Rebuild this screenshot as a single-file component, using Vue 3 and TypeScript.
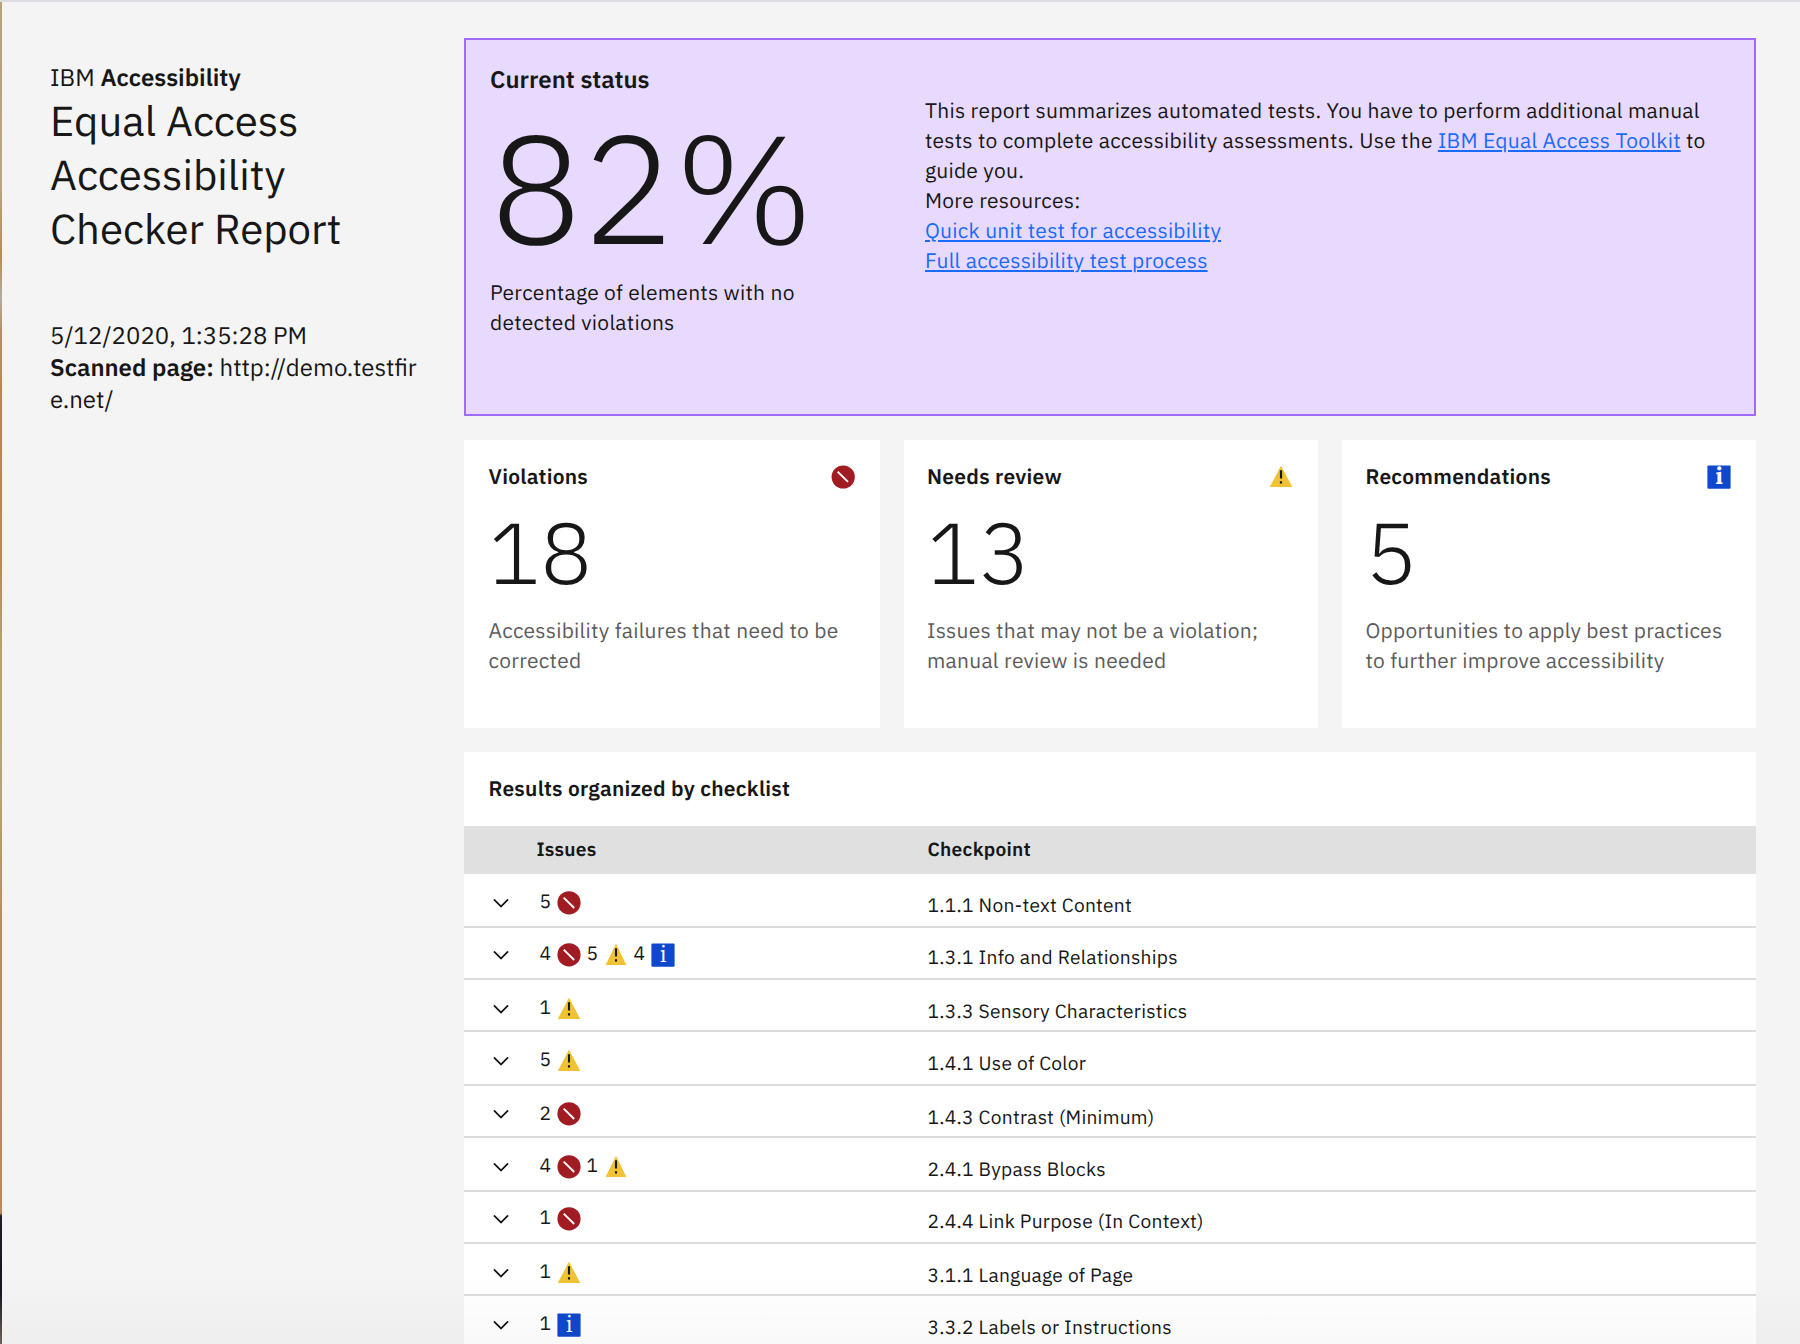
<script setup lang="ts">
type Kind = 'violation' | 'review' | 'info'

interface Summary {
  title: string
  count: number
  kind: Kind
  text: string
}

interface Row {
  issues: { count: number; kind: Kind }[]
  checkpoint: string
  size?: string
}

const summaries: Summary[] = [
  { title: 'Violations', count: 18, kind: 'violation', text: 'Accessibility failures that need to be corrected' },
  { title: 'Needs review', count: 13, kind: 'review', text: 'Issues that may not be a violation; manual review is needed' },
  { title: 'Recommendations', count: 5, kind: 'info', text: 'Opportunities to apply best practices to further improve accessibility' },
]

const rows: Row[] = [
  { issues: [{ count: 5, kind: 'violation' }], checkpoint: '1.1.1 Non-text Content', size: 'tall' },
  {
    issues: [{ count: 4, kind: 'violation' }, { count: 5, kind: 'review' }, { count: 4, kind: 'info' }],
    checkpoint: '1.3.1 Info and Relationships',
    size: 'raised',
  },
  { issues: [{ count: 1, kind: 'review' }], checkpoint: '1.3.3 Sensory Characteristics' },
  { issues: [{ count: 5, kind: 'review' }], checkpoint: '1.4.1 Use of Color', size: 'tall' },
  { issues: [{ count: 2, kind: 'violation' }], checkpoint: '1.4.3 Contrast (Minimum)', size: 'snug' },
  { issues: [{ count: 4, kind: 'violation' }, { count: 1, kind: 'review' }], checkpoint: '2.4.1 Bypass Blocks', size: 'tall' },
  { issues: [{ count: 1, kind: 'violation' }], checkpoint: '2.4.4 Link Purpose (In Context)', size: 'raised' },
  { issues: [{ count: 1, kind: 'review' }], checkpoint: '3.1.1 Language of Page' },
  { issues: [{ count: 1, kind: 'info' }], checkpoint: '3.3.2 Labels or Instructions' },
]
</script>

<template>
  <div class="page">
    <aside class="side">
      <div class="brand">IBM <strong>Accessibility</strong></div>
      <h1>Equal Access<br />Accessibility<br />Checker Report</h1>
      <div class="scan">
        <div>5/12/2020, 1:35:28 PM</div>
        <div class="url"><strong>Scanned page:</strong> http://demo.testfire.net/</div>
      </div>
    </aside>

    <main class="main">
      <section class="status">
        <div class="score">
          <h2>Current status</h2>
          <div class="percent">82%</div>
          <p>Percentage of elements with no detected violations</p>
        </div>
        <div class="about">
          This report summarizes automated tests. You have to perform additional manual tests to complete
          accessibility assessments. Use the <a href="#">IBM Equal Access Toolkit</a> to guide you.<br />
          More resources:<br />
          <a href="#">Quick unit test for accessibility</a><br />
          <a href="#">Full accessibility test process</a>
        </div>
      </section>

      <section class="cards">
        <article v-for="s in summaries" :key="s.title" class="card">
          <header>
            <h3>{{ s.title }}</h3>
            <svg class="icon" viewBox="0 0 24 24">
              <template v-if="s.kind === 'violation'">
                <circle cx="12.2" cy="12" r="11.6" fill="#a11b23" />
                <path d="M6.7 6.8 17 16.9" stroke="#fff" stroke-width="1.9" />
              </template>
              <template v-else-if="s.kind === 'review'">
                <path d="M12 .7 23.4 22.1H.7z" fill="#f1c136" />
                <path d="M12 5.2v8.2M12 16.2v2.3" stroke="#171717" stroke-width="2.2" />
              </template>
              <template v-else>
                <rect x=".4" y=".4" width="23.2" height="23.3" rx="1" fill="#0f48cc" />
                <text x="12" y="19" class="glyph strong">i</text>
              </template>
            </svg>
          </header>
          <div class="count">{{ s.count }}</div>
          <p>{{ s.text }}</p>
        </article>
      </section>

      <section class="results">
        <h3>Results organized by checklist</h3>
        <div class="head">
          <span class="col-issues">Issues</span>
          <span>Checkpoint</span>
        </div>
        <div v-for="r in rows" :key="r.checkpoint" class="row" :class="r.size">
          <svg class="icon" viewBox="0 0 16 16">
            <path d="M8 11 3 6l.7-.7L8 9.6l4.3-4.3.7.7z" fill="#000" stroke="#000" stroke-width=".15" />
          </svg>
          <div class="issues">
            <span v-for="(i, n) in r.issues" :key="n" class="issue">
              <span class="num">{{ i.count }}</span>
              <svg class="icon" viewBox="0 0 24 24">
                <template v-if="i.kind === 'violation'">
                  <circle cx="12" cy="11.8" r="11.6" fill="#a11b23" />
                  <path d="M6.7 6.6 17.2 17" stroke="#fff" stroke-width="1.9" />
                </template>
                <template v-else-if="i.kind === 'review'">
                  <path :d="n ? 'M12 .7 22.4 22.1H1.6z' : 'M12 .7 23.4 22.1H.7z'" fill="#f1c136" />
                  <path d="M12 5.2v8.2M12 16.2v2.3" stroke="#171717" stroke-width="2.1" />
                </template>
                <template v-else>
                  <rect x=".4" y=".4" width="23.2" height="23.3" rx="1" fill="#0f48cc" />
                  <text x="12" y="19" class="glyph">i</text>
                </template>
              </svg>
            </span>
          </div>
          <span class="checkpoint">{{ r.checkpoint }}</span>
        </div>
      </section>
    </main>
    <div class="shade"></div>
  </div>
</template>

<style>
body {
  margin: 0;
  overflow: hidden;
}
</style>

<style scoped>
.page {
  position: relative;
  box-sizing: border-box;
  width: 1800px;
  height: 1344px;
  overflow: hidden;
  display: flex;
  align-items: flex-start;
  background: #f4f4f4;
  border-top: 2px solid #dcdce1;
  color: #171717;
  font-family: 'IBM Plex Sans', 'Noto Sans', sans-serif;
  text-rendering: geometricPrecision;
}
.page::before {
  content: '';
  width: 2px;
  height: 1344px;
  background: linear-gradient(#b8a07c 0, #b8a684 180px, #b98d4c 255px, #b3aba0 295px, #b5905c 330px, #b98a48 400px, #b98c4c 560px, #b5a36e 650px, #b6a578 780px, #b98f56 920px, #b98a5e 1211px, #211d24 1214px, #15161f 1290px, #6b625c 1342px);
}
h1,
h2,
h3,
p {
  margin: 0;
}
strong,
h2,
h3 {
  font-weight: 600;
}
.side {
  width: 370px;
  margin: 59px 44px 0 48px;
  font-size: 24px;
  line-height: 32px;
}
h1 {
  padding-top: 1px;
  font-size: 42px;
  line-height: 54px;
  font-weight: 400;
}
.scan {
  margin-top: 63px;
}
.url {
  word-break: break-all;
}
.main {
  width: 1292px;
  padding-top: 36px;
  font-size: 21px;
  line-height: 30px;
  letter-spacing: 0.25px;
}
.status {
  box-sizing: border-box;
  height: 378px;
  padding: 23px 24px;
  border: 2px solid #a06cf6;
  background: #e8daff;
  display: flex;
}
.score {
  width: 435px;
}
.score p {
  width: 340px;
}
h2 {
  font-size: 24px;
  line-height: 32px;
  letter-spacing: 0;
}
.percent {
  margin: 13px 0 9px;
  font-size: 153.5px;
  line-height: 160px;
  font-weight: 300;
  letter-spacing: 0;
}
.about {
  width: 800px;
  padding-top: 32px;
}
a {
  color: #1a6bff;
  text-decoration: underline;
  text-decoration-thickness: 2px;
  text-underline-offset: 2px;
}
.cards {
  display: flex;
  justify-content: space-between;
  margin: 24px 0;
}
.card {
  box-sizing: border-box;
  width: 414px;
  height: 288px;
  padding: 24px 25px 0 23px;
  background: #fff;
}
.card:first-child {
  width: 416px;
  padding-left: 24.5px;
}
.card:last-child {
  padding-left: 23.5px;
}
.card header {
  display: flex;
  justify-content: space-between;
}
h3 {
  font-size: 21px;
  line-height: 24px;
}
.icon {
  display: block;
  flex: none;
  width: 24px;
  height: 24px;
}
.card .icon {
  margin-top: 1px;
}
.glyph {
  font-family: 'IBM Plex Serif', 'Liberation Serif', serif;
  font-size: 23px;
  letter-spacing: 0;
  text-anchor: middle;
  fill: #fff;
}
.strong {
  font-weight: 700;
}
.count {
  margin: 15px 0;
  font-size: 86.4px;
  line-height: 96px;
  font-weight: 300;
  letter-spacing: 0;
}
.card p {
  color: #5c5c5c;
}
.results {
  background: #fff;
  font-size: 19.2px;
  line-height: 24px;
}
.results h3 {
  padding: 24px 24.5px 26px;
}
.head {
  display: flex;
  height: 48px;
  padding-left: 72.5px;
  background: #e0e0e0;
  line-height: 48px;
  font-weight: 600;
}
.col-issues {
  width: 391px;
}
.row {
  box-sizing: border-box;
  display: flex;
  height: 52px;
  padding: 17px 0 0 25px;
  border-bottom: 2px solid #dcdcdc;
  letter-spacing: 0.26px;
}
.tall {
  height: 54px;
}
.raised {
  padding-top: 15px;
}
.snug .icon {
  margin-top: -1px;
}
.issues {
  display: flex;
  gap: 6px;
  width: 387.5px;
  margin-left: 27px;
}
.issue {
  display: flex;
}
.num {
  width: 17px;
  margin-top: -1px;
  text-indent: -0.5px;
}
.checkpoint {
  margin-top: 3px;
}
.shade {
  position: absolute;
  left: 2px;
  right: 0;
  bottom: 0;
  height: 70px;
  background: linear-gradient(rgba(0, 0, 0, 0), rgba(0, 0, 0, 0.025));
}
</style>
